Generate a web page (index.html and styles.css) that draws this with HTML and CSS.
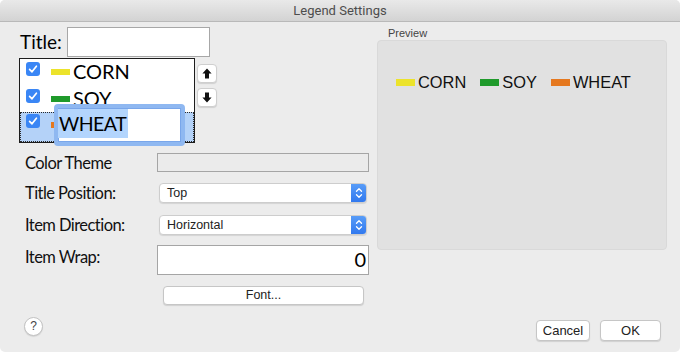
FILE: index.html
```html
<!DOCTYPE html>
<html>
<head>
<meta charset="utf-8">
<title>Legend Settings</title>
<link rel="stylesheet" href="styles.css">
</head>
<body>
<div class="window">
  <div class="titlebar">Legend Settings</div>
  <div class="content">
    <div class="left">
      <div class="title-row">
        <span class="big-label">Title:</span>
        <div class="textfield title-field"></div>
      </div>
      <div class="list-row">
        <div class="listbox">
          <div class="item r1">
            <svg class="cb" width="14" height="14" viewBox="0 0 14 14"><rect x="0" y="0" width="14" height="14" rx="3" fill="#3a86f5"/><path d="M3.6 7.4 L6 9.8 L10.4 4.2" fill="none" stroke="#fff" stroke-width="1.7" stroke-linecap="round" stroke-linejoin="round"/></svg>
            <span class="swatch yellow"></span><span class="name">CORN</span>
          </div>
          <div class="item r2">
            <svg class="cb" width="14" height="14" viewBox="0 0 14 14"><rect x="0" y="0" width="14" height="14" rx="3" fill="#3a86f5"/><path d="M3.6 7.4 L6 9.8 L10.4 4.2" fill="none" stroke="#fff" stroke-width="1.7" stroke-linecap="round" stroke-linejoin="round"/></svg>
            <span class="swatch green"></span><span class="name">SOY</span>
          </div>
          <div class="item r3 selected">
            <svg class="cb" width="14" height="14" viewBox="0 0 14 14"><rect x="0" y="0" width="14" height="14" rx="3" fill="#3a86f5"/><path d="M3.6 7.4 L6 9.8 L10.4 4.2" fill="none" stroke="#fff" stroke-width="1.7" stroke-linecap="round" stroke-linejoin="round"/></svg>
            <span class="swatch orange"></span>
          </div>
          <div class="editor"><span class="sel">WHEAT</span></div>
        </div>
        <div class="movers">
          <div class="mover"><svg width="10" height="11" viewBox="0 0 10 11"><path d="M5 0.5 L9.6 5.6 H7 V10.5 H3 V5.6 H0.4 Z" fill="#111"/></svg></div>
          <div class="mover"><svg width="10" height="11" viewBox="0 0 10 11"><path d="M5 10.5 L9.6 5.4 H7 V0.5 H3 V5.4 H0.4 Z" fill="#111"/></svg></div>
        </div>
      </div>
      <div class="frow row-theme">
        <span class="flabel">Color Theme</span>
        <div class="theme-field"></div>
      </div>
      <div class="frow row-pos">
        <span class="flabel">Title Position:</span>
        <div class="popup"><span class="popup-text">Top</span>
          <span class="stepper"><svg width="8" height="12" viewBox="0 0 8 12"><path d="M1.5 4.2 L4 1.8 L6.5 4.2 M1.5 7.8 L4 10.2 L6.5 7.8" fill="none" stroke="#fff" stroke-width="1.3" stroke-linecap="round" stroke-linejoin="round"/></svg></span>
        </div>
      </div>
      <div class="frow row-dir">
        <span class="flabel">Item Direction:</span>
        <div class="popup"><span class="popup-text">Horizontal</span>
          <span class="stepper"><svg width="8" height="12" viewBox="0 0 8 12"><path d="M1.5 4.2 L4 1.8 L6.5 4.2 M1.5 7.8 L4 10.2 L6.5 7.8" fill="none" stroke="#fff" stroke-width="1.3" stroke-linecap="round" stroke-linejoin="round"/></svg></span>
        </div>
      </div>
      <div class="frow row-wrap">
        <span class="flabel">Item Wrap:</span>
        <div class="wrap-field">0</div>
      </div>
      <div class="font-row">
        <div class="btn font-btn">Font...</div>
      </div>
    </div>
    <div class="right">
      <div class="preview-label">Preview</div>
      <div class="preview">
        <div class="legend">
          <span class="lswatch yellow"></span><span class="lname">CORN</span>
          <span class="lswatch green"></span><span class="lname">SOY</span>
          <span class="lswatch orange"></span><span class="lname">WHEAT</span>
        </div>
      </div>
    </div>
  </div>
  <div class="footer">
    <div class="help">?</div>
    <div class="spacer"></div>
    <div class="btn cancel">Cancel</div>
    <div class="btn ok">OK</div>
  </div>
</div>
</body>
</html>
```

FILE: styles.css
```css
* { box-sizing: border-box; }
html, body { margin: 0; padding: 0; background: #ffffff; }

.window {
  width: 680px;
  height: 352px;
  background: #ececec;
  border-radius: 5px;
  overflow: hidden;
  display: flex;
  flex-direction: column;
  font-family: Lato, "Noto Sans", sans-serif;
  color: #000;
}

.titlebar {
  flex: none;
  height: 22px;
  background: linear-gradient(#e9e9e9, #d3d3d3);
  border-bottom: 1px solid #b9b9b9;
  text-align: center;
  font: 13px/21px Roboto, "Liberation Sans", sans-serif;
  color: #4d4d4d;
}

.content { flex: none; height: 280px; display: flex; }

.left { width: 372px; padding-top: 5px; }

.title-row { display: flex; align-items: center; height: 30px; padding-left: 20px; }
.big-label { width: 47px; font-size: 19px; line-height: 24px; }
.title-field { width: 143px; height: 30px; background: #fff; border: 1px solid #a7a7a7; }

.list-row { display: flex; margin-top: 1px; padding-left: 19px; }
.listbox {
  position: relative;
  width: 176px;
  height: 85px;
  background: #fff;
  border: 1px solid #1c1c1c;
}
.item { display: flex; align-items: flex-start; padding-left: 6px; }
.item.r1 { height: 27px; }
.item.r2 { height: 26px; }
.item.r3 { height: 30px; }
.cb { flex: none; margin-top: 3px; }
.item.r3 .cb { margin-top: 1px; margin-left: -1px; }
.swatch { flex: none; width: 19px; height: 6px; margin-top: 10px; margin-left: 11px; }
.item.r3 .swatch { margin-top: 9px; }
.name { font-size: 20px; line-height: 24px; margin-left: 3px; }
.selected { background: #b4d2f8; border: 1px dotted #2a2a2a; }

.yellow { background: #ece32b; }
.green { background: #1f9a2b; }
.orange { background: #e5781f; }

.editor {
  position: absolute;
  left: 34px;
  top: 45px;
  width: 131px;
  height: 42px;
  background: #fff;
  border: 4px solid #8fb8f1;
  border-radius: 4px;
  box-shadow: inset 0 0 0 1px #79a6ea;
  padding: 1px 0 0 0;
}
.sel {
  display: inline-block;
  background: #b3d5fd;
  font-size: 19.5px;
  letter-spacing: -0.5px;
  line-height: 29px;
  padding: 0 2px 0 1px;
}

.movers { display: flex; flex-direction: column; gap: 5px; margin-left: 2px; padding-top: 6px; }
.mover {
  width: 20px;
  height: 19px;
  background: #fff;
  border: 1px solid #cfcfcf;
  border-radius: 4px;
  box-shadow: 0 1px 1px rgba(0,0,0,0.12);
  display: flex;
  align-items: center;
  justify-content: center;
}

.frow { display: flex; align-items: center; padding-left: 25px; }
.flabel { width: 132px; flex: none; font-size: 16.5px; letter-spacing: -0.55px; line-height: 20px; color: #111; white-space: nowrap; }
.row-theme { margin-top: 10px; height: 19px; }
.row-pos { margin-top: 11px; height: 20px; }
.row-dir { margin-top: 12px; height: 20px; }
.row-wrap { margin-top: 10px; height: 30px; }
.row-wrap .flabel { margin-top: -6px; }

.theme-field { width: 212px; height: 19px; background: #ebebeb; border: 1px solid #a5a5a5; }

.popup {
  width: 208px;
  height: 20px;
  margin-left: 2px;
  background: #fff;
  border: 1px solid #cdcdcd;
  border-radius: 4px;
  box-shadow: 0 1px 1px rgba(0,0,0,0.10);
  display: flex;
  align-items: center;
  overflow: hidden;
}
.popup-text { flex: 1; padding-left: 7px; font: 12.5px/18px "Liberation Sans", Arial, sans-serif; color: #222; }
.stepper {
  width: 16px;
  height: 20px;
  margin-right: -1px;
  background: linear-gradient(#5a9ef8, #2f77ee);
  display: flex;
  align-items: center;
  justify-content: center;
}

.wrap-field {
  width: 212px;
  height: 30px;
  background: #fff;
  border: 1px solid #a5a5a5;
  text-align: right;
  padding-right: 2px;
  font-size: 20px;
  line-height: 27px;
}

.font-row { padding-left: 163px; margin-top: 11px; }

.btn {
  background: #fff;
  border: 1px solid #c6c6c6;
  border-radius: 4px;
  box-shadow: 0 1px 1px rgba(0,0,0,0.12);
  text-align: center;
  font: 12.5px/17px "Liberation Sans", Arial, sans-serif;
  color: #222;
}
.font-btn { width: 201px; height: 19px; }

.right { width: 308px; padding-left: 5px; }
.preview-label {
  margin-top: 5px;
  padding-left: 11px;
  height: 13px;
  font: 11px/13px "Liberation Sans", Arial, sans-serif;
  color: #444;
}
.preview {
  width: 290px;
  height: 210px;
  background: #e1e1e1;
  border: 1px solid #d9d9d9;
  border-radius: 4px;
  padding: 31px 0 0 18px;
}
.legend { display: flex; align-items: center; height: 20px; }
.lswatch { width: 19px; height: 7px; margin-right: 3px; }
.lname { font: 16.4px/20px "Liberation Sans", Arial, sans-serif; margin-right: 14px; color: #111; }

.footer { flex: 1; display: flex; align-items: flex-start; padding: 0 19px 0 24px; }
.help {
  margin-top: 15px;
  width: 19px;
  height: 19px;
  border-radius: 50%;
  background: #fff;
  border: 1px solid #c2c2c2;
  box-shadow: 0 1px 1px rgba(0,0,0,0.10);
  text-align: center;
  font: 12px/17px "Liberation Sans", Arial, sans-serif;
  color: #444;
}
.spacer { flex: 1; }
.cancel { margin-top: 18px; width: 54px; height: 21px; line-height: 19px; font-size: 13px; }
.ok { margin-top: 18px; margin-left: 10px; width: 61px; height: 21px; line-height: 19px; font-size: 13px; }
```
